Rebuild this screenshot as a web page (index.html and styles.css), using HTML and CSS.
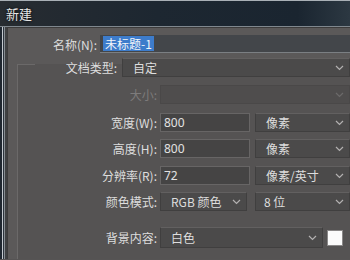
FILE: index.html
```html
<!DOCTYPE html>
<html lang="zh-CN">
<head>
    <meta charset="UTF-8">
    <title>新建</title>
    <link rel="stylesheet" href="styles.css">
</head>
<body>

<div class="titlebar">新建</div>

<div class="window">
    <div class="frame"></div>
    <div class="content">
        <!-- 名称 -->
        <div class="row row-name">
            <label class="lbl">名称(N):</label>
            <div class="name-field"><span class="sel">未标题-1</span></div>
        </div>

        <fieldset class="group">
            <legend class="legend">
                <div class="row row-type">
                    <label class="lbl">文档类型:</label>
                    <div class="select"><span>自定</span><svg width="9" height="6" viewBox="0 0 9 6"><polyline points="1,1 4.5,4.5 8,1"/></svg></div>
                </div>
            </legend>

            <div class="row row-size">
                <label class="lbl dim">大小:</label>
                <div class="select disabled"><span></span><svg width="9" height="6" viewBox="0 0 9 6"><polyline points="1,1 4.5,4.5 8,1"/></svg></div>
            </div>

            <div class="row row-w">
                <label class="lbl">宽度(W):</label>
                <input class="num" type="text" value="800">
                <div class="select unit"><span>像素</span><svg width="9" height="6" viewBox="0 0 9 6"><polyline points="1,1 4.5,4.5 8,1"/></svg></div>
            </div>

            <div class="row row-h">
                <label class="lbl">高度(H):</label>
                <input class="num" type="text" value="800">
                <div class="select unit"><span>像素</span><svg width="9" height="6" viewBox="0 0 9 6"><polyline points="1,1 4.5,4.5 8,1"/></svg></div>
            </div>

            <div class="row row-r">
                <label class="lbl">分辨率(R):</label>
                <input class="num" type="text" value="72">
                <div class="select unit"><span>像素/英寸</span><svg width="9" height="6" viewBox="0 0 9 6"><polyline points="1,1 4.5,4.5 8,1"/></svg></div>
            </div>

            <div class="row row-mode">
                <label class="lbl">颜色模式:</label>
                <div class="select mode"><span>RGB 颜色</span><svg width="9" height="6" viewBox="0 0 9 6"><polyline points="1,1 4.5,4.5 8,1"/></svg></div>
                <div class="select unit bits"><span>8 位</span><svg width="9" height="6" viewBox="0 0 9 6"><polyline points="1,1 4.5,4.5 8,1"/></svg></div>
            </div>

            <div class="row row-bg">
                <label class="lbl">背景内容:</label>
                <div class="select bg"><span>白色</span><svg width="9" height="6" viewBox="0 0 9 6"><polyline points="1,1 4.5,4.5 8,1"/></svg></div>
                <div class="swatch"></div>
            </div>
        </fieldset>
    </div>
</div>

</body>
</html>
```

FILE: styles.css
```css
html, body { margin: 0; padding: 0; }
body { width: 350px; height: 260px; overflow: hidden; background: #565454; font-family: "Noto Sans CJK SC", "Noto Sans", sans-serif; font-size: 12px; color: #dedede; }

.titlebar { height: 25px; line-height: 25px; padding-left: 6px; font-size: 13px; color: #e6e6e6; text-shadow: 0 0 3px #000; border-top: 1px solid #a9b0b6; border-bottom: 1px solid #7f878e; background: linear-gradient(90deg, #272c31 0, #1d2731 45%, #1a2530 85%, #2c3842 100%); }

.window { display: flex; height: 232px; }
.frame { width: 7px; flex: none; background: linear-gradient(90deg, #1f2730 0 2px, #c3c9cf 2px 3px, #2b333c 3px 4px, #868c92 4px 5px, #3f4143 5px 7px); }
.content { flex: 1; border-top: 1px solid #3c3b3b; border-left: 1px solid #3c3b3b; background: #5b5959; }

.row { display: flex; align-items: center; height: 19px; }
.lbl { text-align: right; white-space: nowrap; flex: none; }
.dim { color: #7d7b7b; }

/* 名称 */
.row-name { margin-top: 7px; height: 18px; }
.row-name .lbl { width: 89px; }
.name-field { flex: 1; height: 17px; margin-left: 3px; background: #43464a; border-bottom: 1px solid #7b7f83; display: flex; align-items: center; }
.sel { margin-left: 3px; padding: 0 2px; background: #3d7ccb; color: #f2f6fa; line-height: 15px; }

/* gruppo */
.group { margin: 5px 0 0 9px; padding: 0; min-width: 0; border: 1px solid #6b6969; border-right: 0; border-bottom: 0; background: #555353; height: 200px; }
.legend { padding: 0; margin-left: 17px; width: 315px; height: 12px; }
.row-type { margin-top: 0; }
.row-type .lbl { width: 82px; }
.row-type .select { margin-left: 5px; flex: 1; }

.group .row .lbl { width: 139px; }
.group .row-type .lbl { width: 82px; }
.group > .row .lbl + * { margin-left: 3px; }

.row-size { margin-top: 15px; }
.row-w { margin-top: 9px; }
.row-h { margin-top: 7px; }
.row-r { margin-top: 8px; }
.row-mode { margin-top: 7px; }
.row-bg { margin-top: 16px; height: 21px; }

.select { box-sizing: border-box; height: 19px; display: flex; align-items: center; justify-content: space-between; padding: 0 5px 0 10px; background: #4b4a4a; border: 1px solid #403f3f; border-top-color: #626060; color: #dedede; }
.select svg { flex: none; }
.select polyline { fill: none; stroke: #b3b1b1; stroke-width: 1.2; }
.select.disabled { flex: 1; background: #4f4d4d; border-color: #4a4848; }
.select.disabled polyline { stroke: #6c6a6a; }

.num { box-sizing: border-box; width: 90px; height: 19px; padding: 0 3px; margin: 0; background: #454444; border: 1px solid #676565; color: #e2e2e2; font-family: "Noto Sans", sans-serif; font-size: 12px; outline: none; }
.unit { width: 95px; margin-left: 5px; }
.mode { width: 87px; }
.bits { margin-left: 8px; padding-left: 8px; }
.bg { width: 163px; height: 21px; }
.swatch { width: 14px; height: 14px; margin-left: 4px; background: #fbfbfb; border: 1px solid #8a8888; flex: none; }
```
